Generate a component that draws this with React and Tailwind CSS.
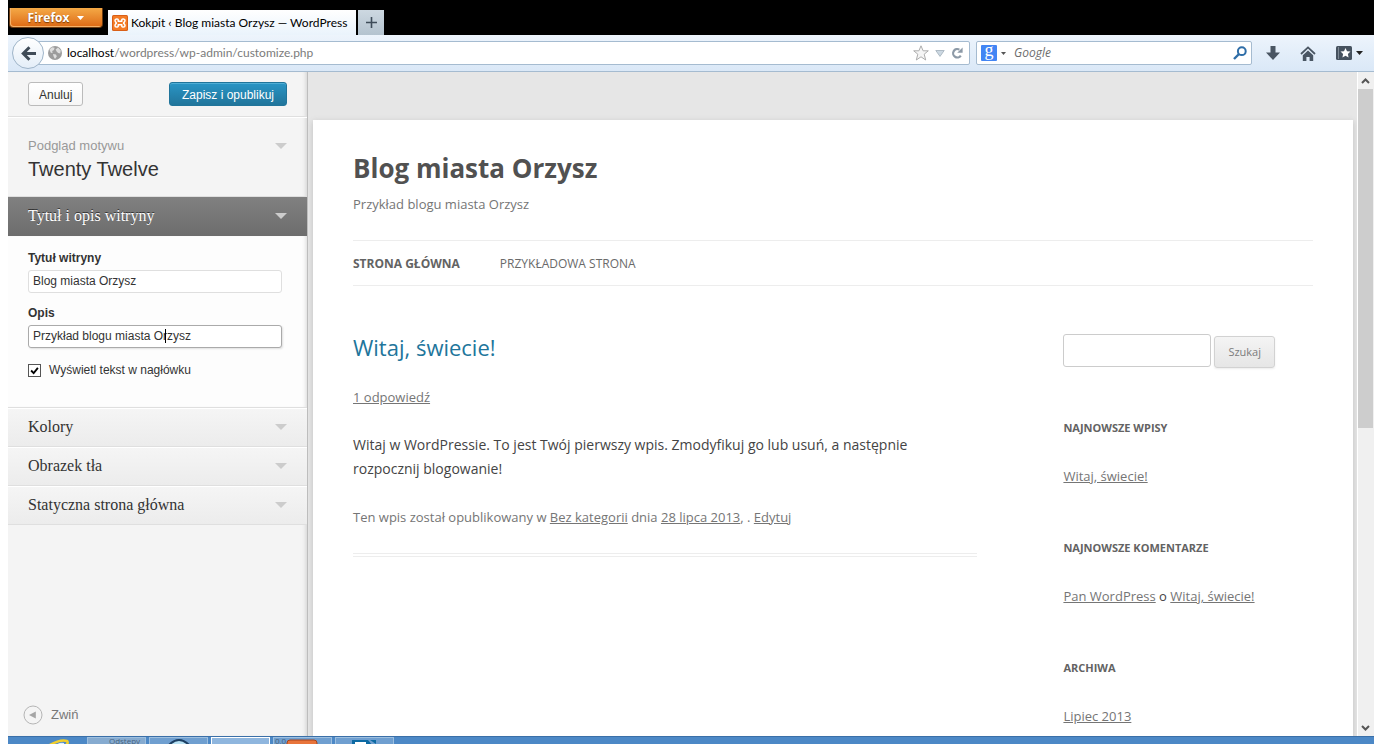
import { useState } from 'react';

const sections = ['Kolory', 'Obrazek tła', 'Statyczna strona główna'];

const widgets = [
  { title: 'Najnowsze wpisy', body: <BlogLink>Witaj, świecie!</BlogLink> },
  {
    title: 'Najnowsze komentarze',
    body: (
      <>
        <BlogLink>Pan WordPress</BlogLink> o <BlogLink>Witaj, świecie!</BlogLink>
      </>
    ),
  },
  { title: 'Archiwa', body: <BlogLink>Lipiec 2013</BlogLink> },
];

function BlogLink({ children }) {
  return (
    <a href="#" className="text-[#757575] underline">
      {children}
    </a>
  );
}

function Arrow({ className = '' }) {
  return (
    <svg viewBox="0 0 12 6" className={`w-3 h-1.5 shrink-0 fill-current ${className}`}>
      <path d="M0 0h12L6 6z" />
    </svg>
  );
}

function TitleBar() {
  return (
    <header className="h-[35px] shrink-0 bg-black flex items-end font-['Lato','Open_Sans',sans-serif]">
      <button className="self-start mt-2 ml-px w-[94px] h-5 rounded-b-sm border border-t-0 border-[#6b3a10] bg-linear-to-b from-[#f4a945] to-[#dc6912] shadow-[inset_1px_-1px_0_#f5b26a] text-white text-xs font-bold font-['Open_Sans',sans-serif] flex items-center justify-center gap-2 [text-shadow:0_1px_1px_#7a3a00]">
        Firefox
        <svg viewBox="0 0 7 4" className="w-[7px] h-1 fill-white">
          <path d="M0 0h7L3.5 4z" />
        </svg>
      </button>
      <div className="ml-[5px] h-[25px] w-[248px] bg-linear-to-b from-white to-[#eaf3fc] flex items-center gap-[3px] pl-1 text-xs text-black whitespace-nowrap">
        <svg viewBox="0 0 16 16" className="size-4 shrink-0">
          <rect width="16" height="16" rx="1.5" fill="#d95f18" />
          <rect x="1" y="1" width="14" height="14" rx="1" fill="#f47b25" />
          <path
            d="M6.2 6.3V4.8C6.200 3.500 3 3.500 3 5.300c0 1.200.8 1.700 1.400 2.700C3.800 9 3 9.500 3 10.700c0 1.800 3.200 1.800 3.200.5V9.700h3.600v1.500c0 1.300 3.200 1.300 3.200-.5 0-1.200-.8-1.700-1.400-2.700.6-1 1.400-1.500 1.400-2.700 0-1.800-3.200-1.800-3.200-.5v1.500z"
            fill="none"
            stroke="#fff"
            strokeWidth="1.5"
            strokeLinejoin="round"
          />
        </svg>
        Kokpit ‹ Blog miasta Orzysz — WordPress
      </div>
      <button aria-label="Nowa karta" className="ml-0.5 w-[26px] h-[25px] bg-linear-to-b from-[#cdd8e1] to-[#b4c3cf] flex items-center justify-center">
        <svg viewBox="0 0 11 11" className="size-[11px]">
          <path d="M5.5 0v11M0 5.5h11" stroke="#3e4c59" strokeWidth="1.6" />
        </svg>
      </button>
    </header>
  );
}

function NavBar() {
  return (
    <nav className="h-[37px] shrink-0 border-b border-[#a5bbd0] bg-linear-to-b from-[#edf4fc] to-[#dae8f7] flex items-center pl-1 pr-[11px] font-['Lato','Open_Sans',sans-serif]">
      <button aria-label="Wstecz" className="relative z-10 size-8 shrink-0 rounded-full border border-[#9fb5c9] bg-linear-to-b from-white to-[#e4eef8] flex items-center justify-center">
        <svg viewBox="0 0 16 16" className="size-[15px]">
          <path d="M9 1.4 2.4 8 9 14.600M3 8h13" fill="none" stroke="#404c58" strokeWidth="3.2" />
        </svg>
      </button>
      <div className="-ml-3 h-6 grow rounded-r-xs border border-[#a5bbd0] bg-white flex items-center pl-[15px] pr-1.5 text-xs">
        <svg viewBox="0 0 14 14" className="size-3.5 shrink-0">
          <circle cx="7" cy="7" r="7" fill="#9c9c9c" />
          <path d="M1.4 3.6 4 1.2l2.6.6L6 4 4.2 5 4.6 7 2.8 6.8zM7.6 3.6l2.4-2 2.8 3-.6 3-2-.6-1.4-1.2zM5 8l3 .6.8 1.8L7 13l-1.4-2.4z" fill="#dedede" />
        </svg>
        <span className="ml-[5px] grow text-[#7b7b7b]">
          <span className="text-black">localhost</span>/wordpress/wp-admin/customize.php
        </span>
        <svg viewBox="0 0 16 16" className="size-4 shrink-0">
          <path d="m8 .8 2.1 5h5.2l-4.1 3.4 1.5 5.8L8 11.8 3.3 15l1.5-5.8L.7 5.8h5.2z" fill="#f5f5f5" stroke="#adadad" />
        </svg>
        <svg viewBox="0 0 10 7" className="ml-1.5 w-2.5 h-[7px] shrink-0">
          <path d="M.8.5h8.4L5 6.4z" fill="#ccd8e2" stroke="#aebac4" />
        </svg>
        <svg viewBox="0 0 12 12" className="ml-1.5 size-3 shrink-0">
          <path d="M9.8 8.6A4.2 4.2 0 1 1 8.4 2.6" fill="none" stroke="#8d9aa7" strokeWidth="2.2" />
          <path d="M11.6.4v5.4H6.2z" fill="#8d9aa7" />
        </svg>
      </div>
      <div className="ml-1.5 h-6 w-[276px] shrink-0 rounded-xs border border-[#a5bbd0] bg-white flex items-center px-1 text-xs">
        <span className="size-4 shrink-0 rounded-[1px] bg-[#4285f4] text-white font-['Liberation_Serif',serif] text-lg leading-[10px] text-center">g</span>
        <svg viewBox="0 0 5 3" className="ml-1 w-[5px] h-[3px] fill-[#555]">
          <path d="M0 0h5L2.5 3z" />
        </svg>
        <input aria-label="Szukaj w sieci" placeholder="Google" className="ml-2 min-w-0 grow outline-none italic font-['Open_Sans',sans-serif] placeholder:text-[#6d6d6d]" />
        <svg viewBox="0 0 14 14" className="size-3.5 shrink-0">
          <circle cx="8.8" cy="5.2" r="3.9" fill="none" stroke="#2f6ea8" strokeWidth="2" />
          <path d="M6 8 1 13" stroke="#2f6ea8" strokeWidth="2.4" />
        </svg>
      </div>
      <div className="ml-3.5 flex items-center gap-5">
        <button aria-label="Pobrane">
          <svg viewBox="0 0 14 14" className="size-3.5">
            <path d="M4.5 0h5v6.5H14L7 14 0 6.5h4.5z" fill="#4a5663" />
          </svg>
        </button>
        <button aria-label="Strona startowa">
          <svg viewBox="0 0 16 15" className="w-4 h-[15px]">
            <path d="M1 8 8 1.4 15 8" fill="none" stroke="#4a5663" strokeWidth="1.8" />
            <path d="M8 4.4 2.8 9.2V15H6.4v-4h3.2v4h3.6V9.2z" fill="#4a5663" />
          </svg>
        </button>
        <button aria-label="Zakładki" className="flex items-center gap-1">
          <svg viewBox="0 0 16 14" className="w-4 h-3.5">
            <rect width="16" height="14" rx="1.5" fill="#46525f" />
            <path d="M2.5 1v12" stroke="#7d8893" />
            <path d="m9.5 2 1.5 3.200 3.500.4-2.600 2.400.7 3.500-3.100-1.700-3.100 1.700.7-3.500-2.600-2.400 3.500-.4z" fill="#fff" />
          </svg>
          <svg viewBox="0 0 7 4" className="w-[7px] h-1 fill-[#222]">
            <path d="M0 0h7L3.5 4z" />
          </svg>
        </button>
      </div>
    </nav>
  );
}

function Customizer() {
  const [title, setTitle] = useState('Blog miasta Orzysz');
  const [tagline, setTagline] = useState('Przykład blogu miasta Orzysz');
  const [showText, setShowText] = useState(true);

  return (
    <aside className="w-[300px] shrink-0 border-r border-[#bdbdbd] bg-[#f4f4f4] shadow-[inset_-4px_0_4px_-3px_#00000026] flex flex-col font-['Liberation_Sans',Arial,sans-serif] text-xs text-[#333]">
      <div className="h-[45px] px-5 border-b border-[#dfdfdf] flex items-center justify-between">
        <button className="h-6 px-2.5 pt-px rounded-[3px] border border-[#bbb] bg-linear-to-b from-white to-[#f6f6f6]">Anuluj</button>
        <button className="h-6 px-3 pt-px rounded-[3px] border border-[#21759b] bg-linear-to-b from-[#2a95c5] to-[#21759b] shadow-[inset_0_1px_0_#78c8e680] text-white">Zapisz i opublikuj</button>
      </div>

      <button className="h-20 px-5 border-y border-t-white border-b-[#dfdfdf] flex items-start justify-between text-left">
        <span className="pt-5">
          <span className="block text-[13px] leading-4 text-[#999]">Podgląd motywu</span>
          <span className="block text-xl leading-[30px]">Twenty Twelve</span>
        </span>
        <Arrow className="mt-[25px] text-[#ccc]" />
      </button>

      <button className="h-[39px] px-5 pb-0.5 bg-linear-to-b from-[#808080] to-[#6d6d6d] flex items-center justify-between font-['Liberation_Serif',Georgia,serif] text-base text-white [text-shadow:0_-1px_0_#333]">
        Tytuł i opis witryny
        <Arrow className="text-[#ccc]" />
      </button>

      <div className="h-[172px] pl-5 pr-[25px] pt-[13px] border-b border-[#dfdfdf] bg-[#fdfdfd] shadow-[inset_-4px_0_4px_-3px_#00000026]">
        <label htmlFor="site-title" className="block leading-[18px] font-bold">Tytuł witryny</label>
        <input
          id="site-title"
          value={title}
          onChange={(e) => setTitle(e.target.value)}
          className="mt-[3px] block w-full h-[23px] px-1 pb-0.5 rounded-[3px] border border-[#dfdfdf] bg-white outline-none"
        />
        <label htmlFor="site-tagline" className="mt-[11px] block leading-[18px] font-bold">Opis</label>
        <div className="relative mt-[3px]">
          <input
            id="site-tagline"
            value={tagline}
            onChange={(e) => setTagline(e.target.value)}
            className="block w-full h-[23px] px-1 pb-0.5 rounded-[3px] border border-[#aaa] bg-white shadow-[1px_1px_2px_#0000001f] outline-none"
          />
          <span className="absolute left-[137px] top-1 w-px h-3.5 bg-black" />
        </div>
        <label className="mt-[13px] flex items-center gap-2 leading-[18px]">
          <input
            type="checkbox"
            checked={showText}
            onChange={(e) => setShowText(e.target.checked)}
            className="peer sr-only"
          />
          <svg viewBox="0 0 13 13" className="size-[13px] border border-[#555] bg-white fill-none stroke-transparent peer-checked:stroke-black">
            <path d="m2.5 6.5 3 3 5-6" strokeWidth="2.2" />
          </svg>
          Wyświetl tekst w nagłówku
        </label>
      </div>

      {sections.map((name) => (
        <button
          key={name}
          className="h-[39px] px-5 pb-0.5 border-y border-t-white border-b-[#dfdfdf] bg-linear-to-b from-[#f5f5f5] to-[#ececec] flex items-center justify-between font-['Liberation_Serif',Georgia,serif] text-base"
        >
          {name}
          <Arrow className="text-[#ccc]" />
        </button>
      ))}

      <button className="mt-auto mb-[11px] ml-[15px] flex items-center gap-2 self-start text-[13px] leading-5 text-[#777]">
        <svg viewBox="0 0 20 20" className="size-5">
          <circle cx="10" cy="10" r="9" fill="none" stroke="#b5b5b5" />
          <path d="M12.8 6.5v7L6 10z" fill="#a5a5a5" />
        </svg>
        Zwiń
      </button>
    </aside>
  );
}

function Preview() {
  return (
    <main className="min-w-0 grow overflow-hidden bg-[#e6e6e6] pt-12 pl-[5px] pr-1 text-[#757575]">
      <div className="h-full bg-white pt-6 px-10 shadow-[0_2px_6px_#6464644d]">
        <h1 className="text-[26px] leading-[48px] font-bold text-[#515151]">Blog miasta Orzysz</h1>
        <p className="text-[13px] leading-6">Przykład blogu miasta Orzysz</p>

        <nav className="mt-6 h-[46px] pt-0.5 border-y border-[#ededed] flex items-center gap-10 text-xs uppercase">
          <a href="#" className="font-bold text-[#636363]">Strona główna</a>
          <a href="#" className="text-[#6a6a6a]">Przykładowa strona</a>
        </nav>

        <div className="mt-12 flex justify-between">
          <article className="w-[65%] text-[13px] leading-6">
            <h2 className="text-[22px] leading-[26px] text-[#21759b]">Witaj, świecie!</h2>
            <p className="mt-[25px]"><BlogLink>1 odpowiedź</BlogLink></p>
            <p className="mt-6 pr-1 text-sm leading-6 text-[#444]">
              Witaj w WordPressie. To jest Twój pierwszy wpis. Zmodyfikuj go lub usuń, a następnie rozpocznij blogowanie!
            </p>
            <p className="mt-6">
              Ten wpis został opublikowany w <BlogLink>Bez kategorii</BlogLink> dnia <BlogLink>28 lipca 2013</BlogLink>, . <BlogLink>Edytuj</BlogLink>
            </p>
            <div className="mt-6 h-1 border-y border-[#ededed]" />
          </article>

          <aside className="w-[26%] text-[13px] leading-6 text-[#444]">
            <form className="flex items-end gap-[3px]" onSubmit={(e) => e.preventDefault()}>
              <input aria-label="Szukaj" className="h-[33px] w-[148px] rounded-[3px] border border-[#ccc] px-2 outline-none" />
              <button className="-mb-px h-8 px-[13px] rounded-[3px] border border-[#d2d2d2] bg-linear-to-b from-[#f4f4f4] to-[#e6e6e6] shadow-[0_1px_2px_#4040401a] text-[11px] text-[#7c7c7c]">Szukaj</button>
            </form>
            <div className="mt-[49px] flex flex-col gap-12">
              {widgets.map((w) => (
                <section key={w.title}>
                  <h3 className="text-[11px] leading-6 font-bold uppercase text-[#636363]">{w.title}</h3>
                  <p className="mt-6">{w.body}</p>
                </section>
              ))}
            </div>
          </aside>
        </div>
      </div>
    </main>
  );
}

function ScrollBar() {
  return (
    <div className="w-[17px] shrink-0 border-x border-l-white border-r-[#f0f0f0] bg-[#f0f0f0] flex flex-col items-center">
      <svg viewBox="0 0 15 17" className="w-[15px] h-[17px] shrink-0">
        <path d="m4 11 3.5-3.5L11 11" fill="none" stroke="#555" strokeWidth="2" />
      </svg>
      <div className="h-[339px] w-[15px] bg-[#cdcdcd]" />
      <svg viewBox="0 0 15 17" className="mt-auto w-[15px] h-[17px] shrink-0">
        <path d="m4 7 3.5 3.5L11 7" fill="none" stroke="#555" strokeWidth="2" />
      </svg>
    </div>
  );
}

function TaskBar() {
  const slot = 'w-[59px] border border-b-0 flex justify-center';
  return (
    <footer className="h-2 shrink-0 border-t border-[#3a6fa8] bg-[#4c88c6] flex gap-[3px]">
      <svg viewBox="0 0 76 7" className="w-[76px] h-[7px] shrink-0">
        <path d="M40 9Q52 2 59 4Q61 6 57 9" fill="none" stroke="#f3cf2c" strokeWidth="2.5" />
        <path d="M48 9q4-3 8-2" fill="none" stroke="#dff0fb" strokeWidth="2" />
      </svg>
      <div className={`${slot} border-[#9dbfdf] bg-[#86abd0] text-[8px] leading-[6px] text-[#47637f]`}>
        <span className="ml-4">Odstepy</span>
      </div>
      <div className={`${slot} border-[#9dbfdf] bg-[#6f9fd0]`}>
        <svg viewBox="0 0 28 6" className="w-7 h-1.5">
          <path d="M3 8q11-12 22 0" fill="#b8e2f4" stroke="#1c3f63" strokeWidth="2" />
        </svg>
      </div>
      <div className={`${slot} border-white bg-[#8fb6de]`} />
      <div className={`${slot} border-[#9dbfdf] bg-[#6f9fd0] text-[8px] leading-[6px] text-[#47637f]`}>
        <span>0,0</span>
        <svg viewBox="0 0 32 6" className="mr-3 w-8 h-1.5 shrink-0">
          <rect x="1" y="2" width="30" height="12" rx="3" fill="#e8743b" stroke="#a8431a" />
        </svg>
      </div>
      <div className={`${slot} border-[#9dbfdf] bg-[#6f9fd0]`}>
        <svg viewBox="0 0 28 6" className="w-7 h-1.5">
          <path d="M1 2h16l5 6H1z" fill="#0d6aa3" />
          <path d="M4 4h11v3H4z" fill="#fff" />
          <path d="M19 2h6v4z" fill="#0d6aa3" />
        </svg>
      </div>
    </footer>
  );
}

export default function App() {
  return (
    <div className="h-screen px-2 bg-white flex flex-col font-['Open_Sans','Noto_Sans',sans-serif]">
      <TitleBar />
      <NavBar />
      <div className="min-h-0 grow flex">
        <Customizer />
        <Preview />
        <ScrollBar />
      </div>
      <TaskBar />
    </div>
  );
}
